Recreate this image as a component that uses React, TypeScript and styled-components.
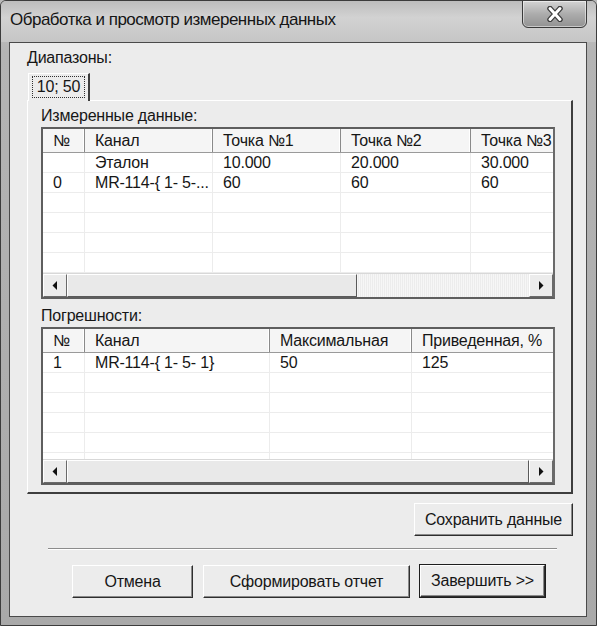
import React from 'react';
import styled, { createGlobalStyle } from 'styled-components';

const GlobalStyle = createGlobalStyle`
  html, body {
    margin: 0;
    padding: 0;
    background: #b9b9b9;
  }
  * {
    box-sizing: border-box;
  }
`;

const Window = styled.div`
  width: 597px;
  height: 626px;
  display: flex;
  flex-direction: column;
  background: linear-gradient(180deg, #c9c9c9 0%, #b4b4b4 8%, #a9a9a9 100%);
  border: 1px solid #3c3c3c;
  border-radius: 6px 6px 0 0;
  font-family: "Liberation Sans", Arial, sans-serif;
  color: #161616;
  overflow: hidden;
`;

const TitleBar = styled.div`
  height: 41px;
  flex-shrink: 0;
  display: flex;
  align-items: flex-start;
  justify-content: space-between;
  padding: 0 9px 0 9px;
  background: linear-gradient(180deg, #bdbdbd 0%, #d2d2d2 40%, #c6c6c6 100%);
`;

const Title = styled.div`
  margin-top: 9px;
  font-family: "Liberation Sans", Arial, sans-serif;
  font-size: 17px;
  letter-spacing: -0.5px;
  color: #151515;
`;

const CloseButton = styled.div`
  width: 65px;
  height: 28px;
  margin-top: -1px;
  display: flex;
  align-items: center;
  justify-content: center;
  border: 1px solid #3a3a3a;
  border-radius: 0 0 6px 6px;
  background: linear-gradient(180deg, #d4d4d4 0%, #acacac 50%, #929292 100%);
  box-shadow: inset 0 0 0 1px rgba(255, 255, 255, 0.5);
`;

const Client = styled.div`
  flex: 1;
  margin: 0 9px 8px 8px;
  border: 1px solid #4a4a4a;
  background: #ececec;
  display: flex;
  flex-direction: column;
  padding: 7px 13px 0 17px;
`;

const Label = styled.div`
  font-size: 16px;
  line-height: 16px;
  height: 16px;
  letter-spacing: -0.2px;
`;

const TabStrip = styled.div`
  display: flex;
  margin-top: 7px;
  padding-left: 1px;
`;

const Tab = styled.div<{ $active?: boolean }>`
  width: 62px;
  height: 28px;
  padding: 2px 3px 3px 3px;
  background: #ececec;
  border-top: 1px solid #ffffff;
  border-left: 1px solid #ffffff;
  border-right: 2px solid #3e3e3e;
  position: relative;
  margin-bottom: -1px;
  z-index: ${p => (p.$active ? 1 : 0)};
`;

const FocusBox = styled.div`
  height: 100%;
  border: 1px dotted #303030;
  display: flex;
  align-items: center;
  justify-content: center;
  font-size: 16px;
  letter-spacing: -0.2px;
`;

const TabPanel = styled.div`
  width: 546px;
  height: 394px;
  display: flex;
  flex-direction: column;
  padding: 7px 0 0 13px;
  border-top: 1px solid #ffffff;
  border-left: 1px solid #ffffff;
  border-right: 2px solid #3e3e3e;
  border-bottom: 2px solid #3e3e3e;
`;

const SectionLabel = styled(Label)<{ $gap?: number }>`
  margin-top: ${p => p.$gap ?? 0}px;
  margin-bottom: 3px;
`;

const GridFrame = styled.div`
  width: 514px;
  display: flex;
  flex-direction: column;
  border: 2px solid #5e5e5e;
  border-right-color: #6a6a6a;
  background: #ffffff;
`;

const GridScroller = styled.div`
  overflow: hidden;
`;

const HeaderRow = styled.div`
  display: flex;
  height: 24px;
  background: #f5f5f5;
  border-bottom: 1px solid #9a9a9a;
`;

const HeaderCell = styled.div<{ $w: number }>`
  flex: 0 0 ${p => p.$w}px;
  padding-left: 10px;
  font-size: 16px;
  line-height: 23px;
  letter-spacing: -0.2px;
  white-space: nowrap;
  overflow: hidden;
  border-right: 1px solid #8a8a8a;
  box-shadow: inset -1px 0 0 #ffffff;
`;

const Body = styled.div<{ $h: number }>`
  height: ${p => p.$h}px;
  overflow: hidden;
`;

const BodyRow = styled.div`
  display: flex;
  height: 20px;
  border-bottom: 1px solid #ececec;
`;

const BodyCell = styled.div<{ $w: number }>`
  flex: 0 0 ${p => p.$w}px;
  padding-left: 10px;
  font-size: 16px;
  line-height: 19px;
  letter-spacing: -0.2px;
  white-space: nowrap;
  overflow: hidden;
  border-right: 1px solid #ececec;
`;

const ScrollBar = styled.div`
  height: 24px;
  display: flex;
  background: #efefef;
  border-top: 1px solid #d8d8d8;
`;

const ArrowButton = styled.div`
  flex: 0 0 24px;
  height: 23px;
  display: flex;
  align-items: center;
  justify-content: center;
  background: #ececec;
  border: 1px solid;
  border-color: #ffffff #6a6a6a #6a6a6a #ffffff;
`;

const Track = styled.div`
  flex: 1;
  display: flex;
  background: repeating-linear-gradient(90deg, #f6f6f6 0 1px, #ececec 1px 2px);
`;

const Thumb = styled.div<{ $fill?: boolean }>`
  height: 23px;
  background: #e9e9e9;
  border: 1px solid;
  border-color: #ffffff #5a5a5a #5a5a5a #ffffff;
  flex: ${p => (p.$fill ? 1 : 'none')};
`;

const SaveRow = styled.div`
  display: flex;
  justify-content: flex-end;
  width: 546px;
  margin-top: 9px;
`;

const Button = styled.div<{ $w: number; $default?: boolean }>`
  width: ${p => p.$w}px;
  height: ${p => (p.$default ? 32 : 33)}px;
  display: flex;
  align-items: center;
  justify-content: center;
  font-size: 16px;
  letter-spacing: -0.2px;
  background: #ececec;
  border: 1px solid;
  border-color: #ffffff #2e2e2e #2e2e2e #ffffff;
  box-shadow: ${p =>
    p.$default
      ? '0 0 0 1px #1e1e1e, inset -1px -1px 0 #8a8a8a'
      : 'inset -1px -1px 0 #8a8a8a'};
`;

const Separator = styled.div`
  height: 2px;
  margin: 12px 16px 0 21px;
  border-top: 1px solid #8c8c8c;
  border-bottom: 1px solid #ffffff;
`;

const ButtonRow = styled.div`
  display: flex;
  gap: 10px;
  margin-top: 15px;
  padding-left: 45px;
`;

const Arrow = ({ dir }: { dir: 'left' | 'right' }) => (
  <svg width="6" height="9" viewBox="0 0 6 9">
    {dir === 'left' ? <polygon points="5,0 5,9 0.5,4.5" fill="#111" /> : <polygon points="1,0 1,9 5.5,4.5" fill="#111" />}
  </svg>
);

const CloseGlyph = () => (
  <svg width="20" height="16" viewBox="0 0 20 16">
    <path d="M5 2.5 L15 13.5 M15 2.5 L5 13.5" stroke="#3c3c3c" strokeWidth="5.5" strokeLinecap="round" />
    <path d="M5 2.5 L15 13.5 M15 2.5 L5 13.5" stroke="#ffffff" strokeWidth="3" strokeLinecap="round" />
  </svg>
);

interface IGridProps {
  columns: number[];
  headers: string[];
  rows: string[][];
  bodyHeight: number;
  thumbWidth?: number;
}

const Grid: React.FC<IGridProps> = props => {
  const { columns, headers, rows, bodyHeight, thumbWidth } = props;
  const rowCount = Math.ceil(bodyHeight / 20);
  const filled = [...rows, ...Array.from({ length: Math.max(0, rowCount - rows.length) }, () => [] as string[])];

  return (
    <GridFrame>
      <GridScroller>
        <HeaderRow>
          {headers.map((h, i) => (
            <HeaderCell key={i} $w={columns[i]}>
              {h}
            </HeaderCell>
          ))}
        </HeaderRow>
        <Body $h={bodyHeight}>
          {filled.map((r, ri) => (
            <BodyRow key={ri}>
              {columns.map((w, ci) => (
                <BodyCell key={ci} $w={w}>
                  {r[ci] ?? ''}
                </BodyCell>
              ))}
            </BodyRow>
          ))}
        </Body>
      </GridScroller>
      <ScrollBar>
        <ArrowButton>
          <Arrow dir="left" />
        </ArrowButton>
        <Track>
          {thumbWidth ? <Thumb style={{ width: thumbWidth }} /> : <Thumb $fill />}
        </Track>
        <ArrowButton>
          <Arrow dir="right" />
        </ArrowButton>
      </ScrollBar>
    </GridFrame>
  );
};

const App: React.FC = () => {
  return (
    <>
      <GlobalStyle />
      <Window>
        <TitleBar>
          <Title>Обработка и просмотр измеренных данных</Title>
          <CloseButton>
            <CloseGlyph />
          </CloseButton>
        </TitleBar>
        <Client>
          <Label>Диапазоны:</Label>
          <TabStrip>
            <Tab $active>
              <FocusBox>10; 50</FocusBox>
            </Tab>
          </TabStrip>
          <TabPanel>
            <SectionLabel>Измеренные данные:</SectionLabel>
            <Grid
              columns={[42, 128, 128, 130, 128]}
              headers={['№', 'Канал', 'Точка №1', 'Точка №2', 'Точка №3']}
              rows={[
                ['', 'Эталон', '10.000', '20.000', '30.000'],
                ['0', 'MR-114-{ 1- 5-...', '60', '60', '60'],
              ]}
              bodyHeight={120}
              thumbWidth={290}
            />
            <SectionLabel $gap={9}>Погрешности:</SectionLabel>
            <Grid
              columns={[42, 185, 142, 150]}
              headers={['№', 'Канал', 'Максимальная', 'Приведенная, %']}
              rows={[['1', 'MR-114-{ 1- 5- 1}', '50', '125']]}
              bodyHeight={106}
            />
          </TabPanel>
          <SaveRow>
            <Button $w={159}>Сохранить данные</Button>
          </SaveRow>
          <Separator />
          <ButtonRow>
            <Button $w={121}>Отмена</Button>
            <Button $w={207}>Сформировать отчет</Button>
            <Button $w={125} $default>
              Завершить &gt;&gt;
            </Button>
          </ButtonRow>
        </Client>
      </Window>
    </>
  );
};

export default App;
